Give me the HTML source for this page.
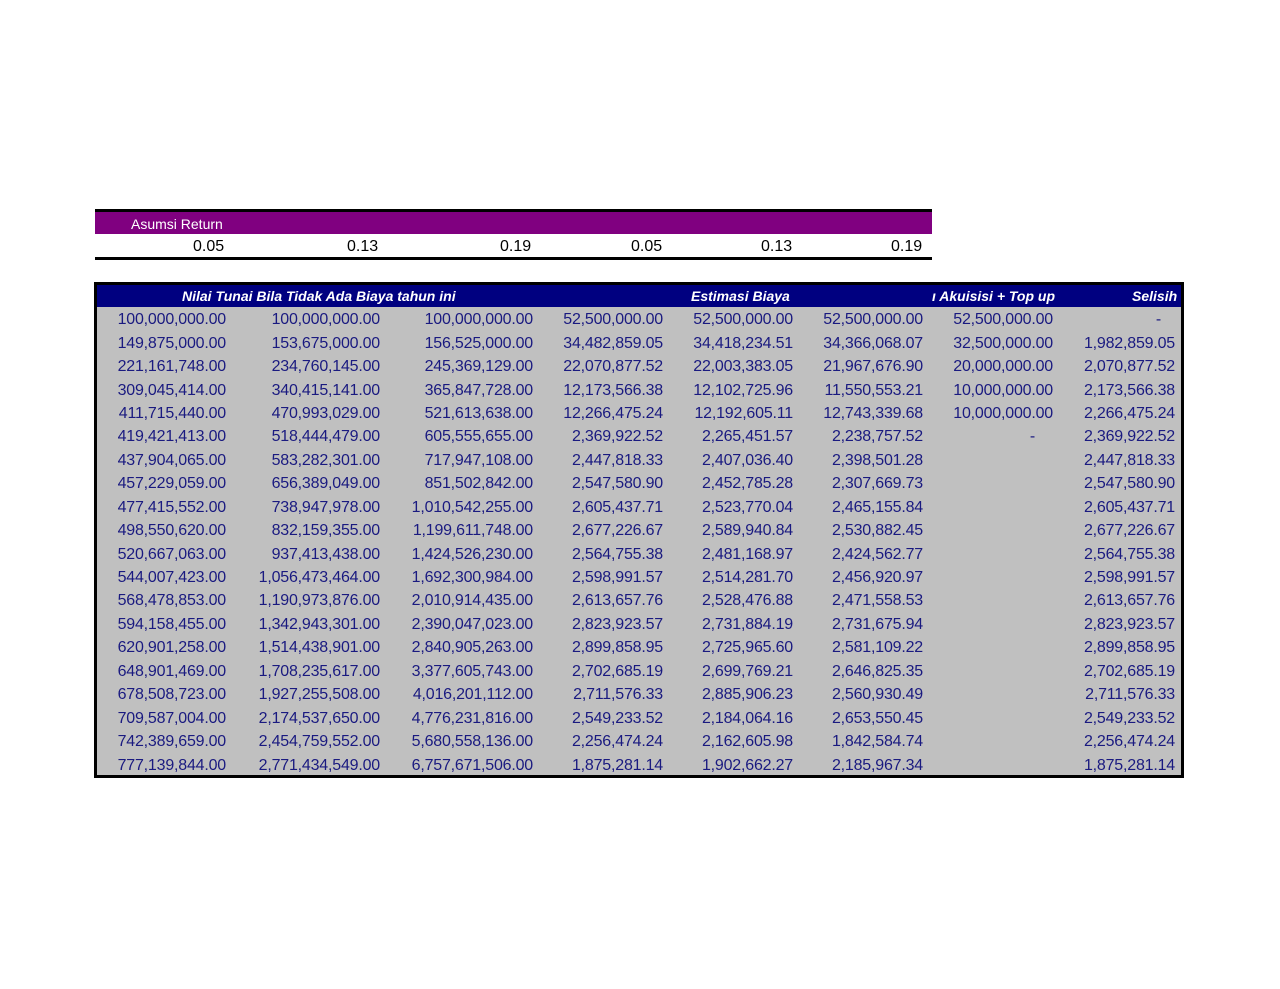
<!DOCTYPE html>
<html><head><meta charset="utf-8"><style>
body{margin:0;width:1280px;height:989px;background:#fff;position:relative;font-family:"Liberation Sans",sans-serif;overflow:hidden}
.top{position:absolute;left:95px;top:209px;width:837px;}
.pb{height:22px;background:#800080;border-top:3px solid #000;color:#fff;font-size:14px;line-height:24px;padding-left:36px;box-sizing:content-box}
.vr{position:relative;height:23px;border-bottom:3px solid #000;font-size:16px}
.vr span{position:absolute;top:4px}
.main{position:absolute;left:94px;top:282px;width:1084px;height:490px;border:3px solid #000;background:#c0c0c0}
.hd{position:absolute;left:0;top:0;width:1084px;height:22px;background:#000080;color:#fff;font-style:italic;font-weight:bold;font-size:14px;line-height:22px;overflow:hidden}
.hd span{position:absolute;white-space:nowrap}
table{position:absolute;left:0;top:23px;border-collapse:collapse;table-layout:fixed;color:#1a1a80;font-size:16px;letter-spacing:-0.2px}
td{height:23.45px;padding:0 6px 0 0;text-align:right;white-space:nowrap;line-height:23px}
</style></head><body>
<div class="top">
<div class="pb">Asumsi Return</div>
<div class="vr"><span style="left:98px">0.05</span><span style="left:252px">0.13</span><span style="left:405px">0.19</span><span style="left:536px">0.05</span><span style="left:666px">0.13</span><span style="left:796px">0.19</span></div>
</div>
<div class="main">
<div class="hd"><span style="left:85px">Nilai Tunai Bila Tidak Ada Biaya tahun ini</span><span style="left:594px">Estimasi Biaya</span><span style="left:835px">ı Akuisisi + Top up</span><span style="left:1035px">Selisih</span></div>
<table>
<colgroup><col style="width:135px"><col style="width:154px"><col style="width:153px"><col style="width:130px"><col style="width:130px"><col style="width:130px"><col style="width:130px"><col style="width:122px"></colgroup>
<tr><td>100,000,000.00</td><td>100,000,000.00</td><td>100,000,000.00</td><td>52,500,000.00</td><td>52,500,000.00</td><td>52,500,000.00</td><td>52,500,000.00</td><td style="padding-right:20px">-</td></tr>
<tr><td>149,875,000.00</td><td>153,675,000.00</td><td>156,525,000.00</td><td>34,482,859.05</td><td>34,418,234.51</td><td>34,366,068.07</td><td>32,500,000.00</td><td>1,982,859.05</td></tr>
<tr><td>221,161,748.00</td><td>234,760,145.00</td><td>245,369,129.00</td><td>22,070,877.52</td><td>22,003,383.05</td><td>21,967,676.90</td><td>20,000,000.00</td><td>2,070,877.52</td></tr>
<tr><td>309,045,414.00</td><td>340,415,141.00</td><td>365,847,728.00</td><td>12,173,566.38</td><td>12,102,725.96</td><td>11,550,553.21</td><td>10,000,000.00</td><td>2,173,566.38</td></tr>
<tr><td>411,715,440.00</td><td>470,993,029.00</td><td>521,613,638.00</td><td>12,266,475.24</td><td>12,192,605.11</td><td>12,743,339.68</td><td>10,000,000.00</td><td>2,266,475.24</td></tr>
<tr><td>419,421,413.00</td><td>518,444,479.00</td><td>605,555,655.00</td><td>2,369,922.52</td><td>2,265,451.57</td><td>2,238,757.52</td><td style="padding-right:24px">-</td><td>2,369,922.52</td></tr>
<tr><td>437,904,065.00</td><td>583,282,301.00</td><td>717,947,108.00</td><td>2,447,818.33</td><td>2,407,036.40</td><td>2,398,501.28</td><td></td><td>2,447,818.33</td></tr>
<tr><td>457,229,059.00</td><td>656,389,049.00</td><td>851,502,842.00</td><td>2,547,580.90</td><td>2,452,785.28</td><td>2,307,669.73</td><td></td><td>2,547,580.90</td></tr>
<tr><td>477,415,552.00</td><td>738,947,978.00</td><td>1,010,542,255.00</td><td>2,605,437.71</td><td>2,523,770.04</td><td>2,465,155.84</td><td></td><td>2,605,437.71</td></tr>
<tr><td>498,550,620.00</td><td>832,159,355.00</td><td>1,199,611,748.00</td><td>2,677,226.67</td><td>2,589,940.84</td><td>2,530,882.45</td><td></td><td>2,677,226.67</td></tr>
<tr><td>520,667,063.00</td><td>937,413,438.00</td><td>1,424,526,230.00</td><td>2,564,755.38</td><td>2,481,168.97</td><td>2,424,562.77</td><td></td><td>2,564,755.38</td></tr>
<tr><td>544,007,423.00</td><td>1,056,473,464.00</td><td>1,692,300,984.00</td><td>2,598,991.57</td><td>2,514,281.70</td><td>2,456,920.97</td><td></td><td>2,598,991.57</td></tr>
<tr><td>568,478,853.00</td><td>1,190,973,876.00</td><td>2,010,914,435.00</td><td>2,613,657.76</td><td>2,528,476.88</td><td>2,471,558.53</td><td></td><td>2,613,657.76</td></tr>
<tr><td>594,158,455.00</td><td>1,342,943,301.00</td><td>2,390,047,023.00</td><td>2,823,923.57</td><td>2,731,884.19</td><td>2,731,675.94</td><td></td><td>2,823,923.57</td></tr>
<tr><td>620,901,258.00</td><td>1,514,438,901.00</td><td>2,840,905,263.00</td><td>2,899,858.95</td><td>2,725,965.60</td><td>2,581,109.22</td><td></td><td>2,899,858.95</td></tr>
<tr><td>648,901,469.00</td><td>1,708,235,617.00</td><td>3,377,605,743.00</td><td>2,702,685.19</td><td>2,699,769.21</td><td>2,646,825.35</td><td></td><td>2,702,685.19</td></tr>
<tr><td>678,508,723.00</td><td>1,927,255,508.00</td><td>4,016,201,112.00</td><td>2,711,576.33</td><td>2,885,906.23</td><td>2,560,930.49</td><td></td><td>2,711,576.33</td></tr>
<tr><td>709,587,004.00</td><td>2,174,537,650.00</td><td>4,776,231,816.00</td><td>2,549,233.52</td><td>2,184,064.16</td><td>2,653,550.45</td><td></td><td>2,549,233.52</td></tr>
<tr><td>742,389,659.00</td><td>2,454,759,552.00</td><td>5,680,558,136.00</td><td>2,256,474.24</td><td>2,162,605.98</td><td>1,842,584.74</td><td></td><td>2,256,474.24</td></tr>
<tr><td>777,139,844.00</td><td>2,771,434,549.00</td><td>6,757,671,506.00</td><td>1,875,281.14</td><td>1,902,662.27</td><td>2,185,967.34</td><td></td><td>1,875,281.14</td></tr>
</table>
</div>
</body></html>
